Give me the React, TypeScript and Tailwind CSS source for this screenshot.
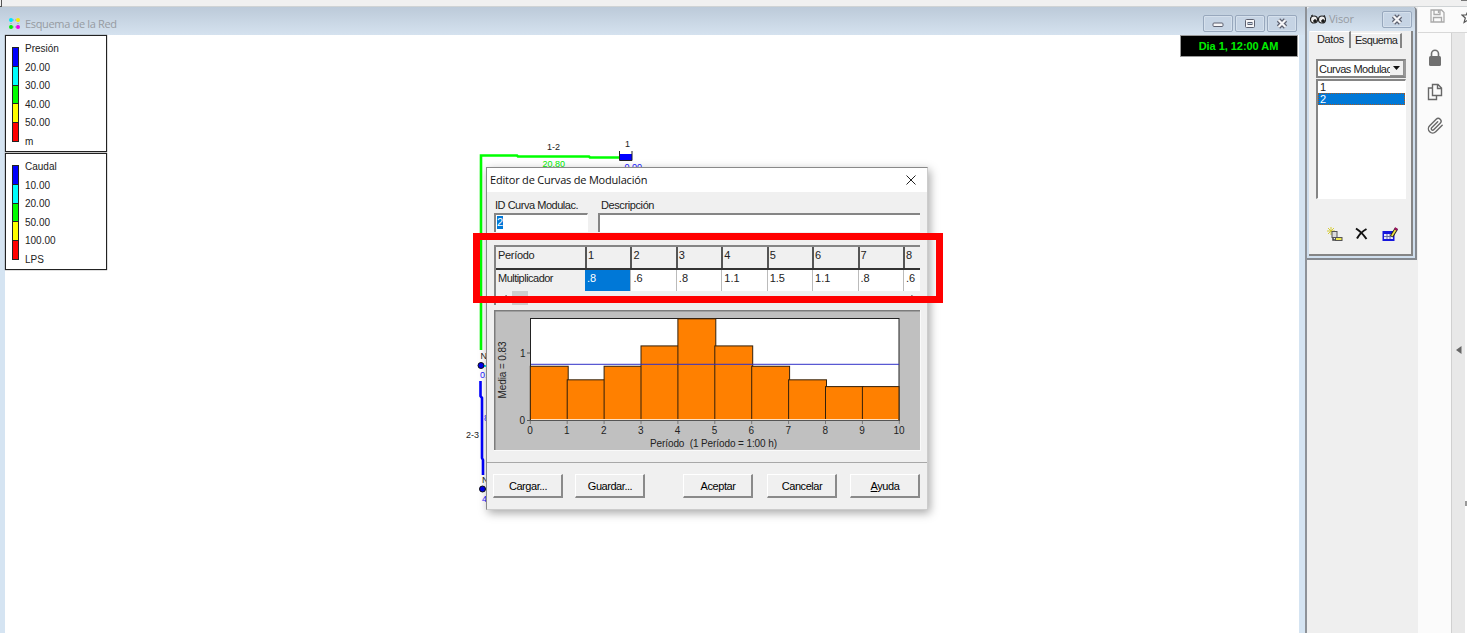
import React from "react";

const COLORS = ["bg-[#0000ff]", "bg-[#00ffff]", "bg-[#00ff00]", "bg-[#ffff00]", "bg-[#ff0000]"];

function Legend({ labels }: { labels: string[] }) {
  return (
    <div className="flex h-[117px] w-[102px] gap-[6px] border border-[#222] bg-white pl-[6px] shadow-[0_0_1px_#444]">
      <div className="mt-[11px] flex h-[95px] w-[7px] flex-col border border-[#222]">
        {COLORS.map((c, i) => (
          <div key={c} className={`flex-1 ${c} ${i ? "border-t border-[#222]" : ""}`} />
        ))}
      </div>
      <div className="mt-[4px] flex flex-col font-['Liberation_Sans',sans-serif] text-[10px] leading-[18.6px] text-[#222]">
        {labels.map((l) => (
          <span key={l}>{l}</span>
        ))}
      </div>
    </div>
  );
}

function WinButton({ kind }: { kind: "min" | "max" | "close" }) {
  return (
    <div className="flex h-[17px] w-[30px] items-center justify-center rounded-[2px] border border-[#98a8bd] bg-[#c6d4e4] shadow-[inset_0_0_0_1px_#d5e0ec]">
      <svg width="12" height="11" viewBox="0 0 12 11">
        {kind === "min" && <rect x="1" y="5" width="10" height="3.5" rx="1" fill="#f6f6f8" stroke="#5d6170" />}
        {kind === "max" && (
          <>
            <rect x="1.500" y="1.500" width="9" height="8" rx="1" fill="#f6f6f8" stroke="#5d6170" />
            <rect x="4" y="4.500" width="4" height="2" fill="#c6d4e4" stroke="#5d6170" />
          </>
        )}
        {kind === "close" && (
          <>
            <path d="M2.500 2l7 7M9.500 2l-7 7" stroke="#5d6170" strokeWidth="4.600" />
            <path d="M2.500 2l7 7M9.500 2l-7 7" stroke="#f6f6f8" strokeWidth="2.200" />
          </>
        )}
      </svg>
    </div>
  );
}

function Network() {
  return (
    <svg className="absolute top-[95px] left-[450px]" width="210" height="380" viewBox="455 130 210 380" fontFamily="Liberation Sans" fontSize="9">
      <path d="M481 350V155.500H517L518 156.500H589L590 157.500H620" fill="none" stroke="#00ff00" strokeWidth="2.600" />
      <path d="M480.500 381V396L482 398V458L483 460V475" fill="none" stroke="#0000ff" strokeWidth="2.600" />
      <rect x="620" y="154" width="12" height="6.500" fill="#0000ff" />
      <path d="M619.500 151v9.500h12.500v-9.500" fill="none" stroke="#222" />
      <path d="M481 366h7M483 489h6" stroke="#00e5ff" strokeWidth="2" />
      <circle cx="481" cy="365.500" r="3" fill="#0000ee" stroke="#111" />
      <circle cx="482.500" cy="489" r="3" fill="#0000ee" stroke="#111" />
      <g fill="#222">
        <text x="547" y="150">1-2</text>
        <text x="625" y="147">1</text>
        <text x="480.500" y="359">N1</text>
        <text x="482" y="483">N2</text>
        <text x="466" y="438">2-3</text>
      </g>
      <text x="542.500" y="167" fill="#00f000" fontSize="9">20.80</text>
      <g fill="#2020ff">
        <text x="624.500" y="169.500" fontSize="9">0.00</text>
        <text x="480" y="378">0.5</text>
        <text x="484" y="421">8</text>
        <text x="482" y="502">4.0</text>
      </g>
    </svg>
  );
}

const MULT = [".8", ".6", ".8", "1.1", "1.5", "1.1", ".8", ".6"];
const DATA = [0.8, 0.6, 0.8, 1.1, 1.5, 1.1, 0.8, 0.6, 0.5, 0.5];

function Chart() {
  const step = 36.9;
  return (
    <svg className="mt-[5px] ml-[7px] block shrink-0" width="427" height="141" viewBox="494 310 427 141" fontFamily="Liberation Sans" fontSize="10" fill="#222">
      <rect x="494" y="310" width="427" height="141" fill="#fafafa" />
      <rect x="494" y="310" width="426" height="140" fill="#7c7c7c" />
      <rect x="495.500" y="311.500" width="424.500" height="138.500" fill="#c0c0c0" />
      <rect x="530.500" y="318.500" width="368.500" height="102" fill="#fff" stroke="#222" />
      {DATA.map((v, i) => (
        <rect
          key={i}
          x={530.3 + i * step}
          y={420.5 - v * 67.8}
          width={i < 9 ? step + 1 : step - 0.3}
          height={v * 67.8}
          fill="#ff8000"
          stroke="#33200a"
        />
      ))}
      <path d="M531 364.300H899" stroke="#3030c8" />
      <path d="M531 419.500H898" stroke="#ffe0c0" />
      <path d="M527 420.500H899M527 353H530" stroke="#555" />
      {DATA.concat(0).map((_, i) => (
        <g key={i}>
          <path d={`M${530.3 + i * step} 421v3`} stroke="#777" />
          <text x={530 + i * step} y="434" textAnchor="middle">{i}</text>
        </g>
      ))}
      <text x="520" y="356.500">1</text>
      <text x="519.500" y="424">0</text>
      <text x="650" y="447" textLength="127" xmlSpace="preserve">{"Período  (1 Período = 1:00 h)"}</text>
      <text transform="translate(506 398.500) rotate(-90)" textLength="57">Media = 0.83</text>
    </svg>
  );
}

function Button({ children }: { children: React.ReactNode }) {
  return (
    <div className="flex h-[24px] w-[70px] items-center justify-center border-t border-r-2 border-b-2 border-l border-t-white border-r-[#8a8a8a] border-b-[#8a8a8a] border-l-white bg-[#f0f0f0] pt-[2px] pl-px text-[11px] tracking-[-0.45px] text-black">
      <span>{children}</span>
    </div>
  );
}

function Dialog() {
  return (
    <div className="absolute top-[132px] left-[481px] flex h-[343px] w-[442px] flex-col border border-[#8a8a8a] border-r-[#ccc] border-b-[#ccc] bg-[#f0f0f0] font-['Liberation_Sans',sans-serif] text-[#222] shadow-[2px_3px_9px_rgba(0,0,0,0.35)]">
      <div className="flex h-[24px] shrink-0 items-center justify-between bg-white pr-[11px] pl-[3px]">
        <span className="font-['Open_Sans',sans-serif] text-[11px] tracking-[-0.2px] whitespace-nowrap text-[#111]">Editor de Curvas de Modulación</span>
        <svg width="10" height="10" viewBox="0 0 10 10">
          <path d="M.5 .5l9 9M9.500 .5l-9 9" stroke="#222" />
        </svg>
      </div>
      <div className="flex h-[21px] shrink-0 items-end text-[11px] leading-[16px] tracking-[-0.47px] whitespace-nowrap">
        <span className="ml-[8px] w-[106px]">ID Curva Modulac.</span>
        <span className="tracking-[-0.4px]">Descripción</span>
      </div>
      <div className="ml-[7px] flex h-[19px] shrink-0 gap-[10px]">
        <div className="flex w-[94px] border-t-2 border-r border-l-2 border-[#858585] border-r-white bg-white pt-[1px] pl-px">
          <span className="h-[13px] bg-[#0078d7] text-[11px] leading-[13px] text-white">2</span>
        </div>
        <div className="w-[322px] border-t-2 border-l-2 border-[#858585] bg-white" />
      </div>
      <div className="mt-[13px] ml-[7px] flex h-[60px] w-[426px] shrink-0 flex-col overflow-hidden border-t-2 border-l-2 border-[#858585] text-[11px]">
        <div className="flex h-[23px] shrink-0 border-b-2 border-[#333]">
          <span className="w-[89px] shrink-0 pl-[2px] leading-[16px] tracking-[-0.3px]">Período</span>
          {MULT.map((_, i) => (
            <span key={i} className="w-[45.430px] shrink-0 border-l-2 border-[#555] pl-[1px] leading-[16px]">{i + 1}</span>
          ))}
        </div>
        <div className="flex h-[21px] shrink-0 bg-white leading-[17px]">
          <span className="w-[89px] shrink-0 bg-[#f0f0f0] pl-[2px] tracking-[-0.52px]">Multiplicador</span>
          {MULT.map((m, i) => (
            <span key={i} className={i === 0 ? "w-[45.430px] shrink-0 bg-[#0078d7] pl-[2px] text-white" : "w-[45.430px] shrink-0 border-l border-[#bbb] pl-[2px]"}>{m}</span>
          ))}
        </div>
        <div className="flex h-[14px] items-center justify-between bg-[#f0f0f0] pr-[5px] pl-[7px]">
          <div className="flex items-center gap-[5px]">
            <svg width="4" height="8" viewBox="0 0 4 8"><path d="M3.500 1L1 4l2.500 3" fill="none" stroke="#444" /></svg>
            <div className="h-[14px] w-[16px] bg-[#cdcdcd]" />
          </div>
          <svg width="4" height="8" viewBox="0 0 4 8"><path d="M.5 1L3 4 .5 7" fill="none" stroke="#444" /></svg>
        </div>
      </div>
      <Chart />
      <div className="mt-[11px] h-px shrink-0 bg-[#a8a8a8]" />
      <div className="mt-[11px] ml-[6px] flex">
        <Button>Cargar...</Button>
        <div className="w-[12px]" />
        <Button>Guardar...</Button>
        <div className="w-[38px]" />
        <Button>Aceptar</Button>
        <div className="w-[14px]" />
        <Button>Cancelar</Button>
        <div className="w-[13px]" />
        <Button><u>A</u>yuda</Button>
      </div>
    </div>
  );
}

function MapWindow() {
  return (
    <section className="flex w-[1305px] shrink-0 flex-col bg-[#d5e4f2]">
      <header className="flex h-[28px] shrink-0 items-center bg-gradient-to-b from-[#bccad9] to-[#d5e2ef] pt-[4px] pr-[8px] pl-[9px]">
        <svg width="11" height="11" viewBox="0 0 11 11">
          <path d="M2 2h7v7H2z" fill="none" stroke="#8c9fae" strokeDasharray="1 1" />
          <circle cx="2" cy="2" r="2" fill="#00e5ff" />
          <circle cx="9" cy="2" r="2" fill="#f6ee00" />
          <circle cx="2" cy="9" r="2" fill="#00ee00" />
          <circle cx="9" cy="9" r="2" fill="#ee00ee" />
        </svg>
        <span className="ml-[5px] flex-1 pt-[2px] font-['Open_Sans',sans-serif] text-[11px] tracking-[-0.33px] text-[#969ba2]">Esquema de la Red</span>
        <div className="flex gap-[2px]">
          <WinButton kind="min" />
          <WinButton kind="max" />
          <WinButton kind="close" />
        </div>
      </header>
      <div className="relative mr-[6px] ml-[5px] flex flex-1 items-start justify-between bg-white">
        <div className="flex flex-col gap-px">
          <Legend labels={["Presión", "20.00", "30.00", "40.00", "50.00", "m"]} />
          <Legend labels={["Caudal", "10.00", "20.00", "50.00", "100.00", "LPS"]} />
        </div>
        <div className="mr-[1px] flex h-[22px] w-[118px] items-center justify-center border border-[#999] bg-black pr-px pt-px font-['Liberation_Sans',sans-serif] text-[11px] font-bold tracking-[-0.05px] whitespace-nowrap text-[#00f000]">Dia 1, 12:00 AM</div>
        <Network />
        <Dialog />
        <div className="absolute top-[198px] left-[468px] h-[70px] w-[470px] border-7 border-[#ff0000]" />
      </div>
    </section>
  );
}

function Visor() {
  return (
    <section className="flex w-[113px] shrink-0 flex-col border-l-2 border-[#8e9298] bg-[#efefef] font-['Liberation_Sans',sans-serif] text-[11px] text-[#222]">
      <div className="flex h-[253px] w-[110px] flex-col rounded-t-[4px] border-r-2 border-b-2 border-[#85898f] bg-[#d0dfee] px-[2px] pb-[2px]">
        <div className="-mx-[2px] flex h-[24px] shrink-0 items-center rounded-t-[4px] bg-gradient-to-b from-[#bccad9] to-[#d5e2ef] pr-[3px] pl-[3px]">
          <svg width="16" height="11" viewBox="0 0 16 11" stroke="#222" fill="#eee">
            <circle cx="4" cy="5.500" r="3.500" strokeWidth="1.200" />
            <circle cx="12" cy="5.500" r="3.500" strokeWidth="1.200" />
            <path d="M1 2l2-1M14 1l1 2" />
            <circle cx="5" cy="7" r="1.300" fill="#111" />
            <circle cx="13" cy="7" r="1.300" fill="#111" />
          </svg>
          <span className="ml-[3px] flex-1 pt-px font-['Open_Sans',sans-serif] tracking-[-0.2px] text-[#969ba2]">Visor</span>
          <WinButton kind="close" />
        </div>
        <div className="flex flex-1 flex-col border-r-2 border-b-2 border-[#858585] bg-[#f0f0f0] pl-px">
          <div className="flex h-[18px] items-start">
            <div className="h-[17px] w-[41px] border-t border-r-2 border-t-white border-r-[#858585] pl-[7px] leading-[14px] tracking-[-0.4px]">Datos</div>
            <div className="mt-[2px] h-[15px] w-[51px] border-t border-r-2 border-t-white border-r-[#858585] pl-[4px] leading-[13px] tracking-[-0.6px]">Esquema</div>
          </div>
          <div className="mt-[10px] ml-[6px] flex h-[19px] w-[90px] shrink-0 border-2 border-[#858585] border-r-[#999] bg-white">
            <span className="w-[72px] pl-px leading-[16px] tracking-[-0.5px] whitespace-nowrap">Curvas Modulac</span>
            <div className="flex flex-1 items-center justify-center border-r border-b border-[#909090] bg-[#f0f0f0]">
              <svg width="7" height="4" viewBox="0 0 7 4"><path d="M0 0h7L3.500 4z" fill="#111" /></svg>
            </div>
          </div>
          <div className="mt-px ml-[6px] flex h-[120px] w-[90px] shrink-0 flex-col border-t-2 border-r border-b border-l-2 border-t-[#858585] border-r-white border-b-white border-l-[#858585] bg-white">
            <span className="h-[12px] pl-[2px] leading-[12px]">1</span>
            <span className="h-[12px] border border-dotted border-[#a65a20] bg-[#0078d7] pl-[1px] leading-[11px] text-white">2</span>
          </div>
          <div className="mt-[28px] ml-[17px] flex gap-[12px]">
            <svg width="16" height="16" viewBox="0 0 16 16">
              <path d="M4 0v8M0 4h8M1 1l6 6M7 1L1 7" stroke="#d5cc35" />
              <rect x="5" y="4.500" width="5" height="6" fill="#ddd" stroke="#555" />
              <path d="M6 11v2h3" fill="none" stroke="#444" strokeWidth="1.500" />
              <rect x="8.500" y="10.500" width="6.500" height="3" fill="#eee850" stroke="#555" />
            </svg>
            <svg className="mr-[2px]" width="13" height="14" viewBox="0 0 13 14">
              <path d="M1 1.500c4 2.500 7 5.500 10.500 10.500M11.500 2C8 4 4.500 7 2 11.500" fill="none" stroke="#111" strokeWidth="2" />
            </svg>
            <svg width="16" height="16" viewBox="0 0 16 16">
              <rect x=".5" y="4" width="12" height="10" fill="#1515dd" />
              <path d="M2 7h9v5H2z" fill="#e8e8ff" />
              <path d="M5 7v5M8 7v5M2 9.500h9" stroke="#666ba5" />
              <path d="M14.500 1.500L9.500 9.500" stroke="#222" strokeWidth="3.500" />
              <path d="M13.500 3L9.800 9" stroke="#eee040" strokeWidth="1.700" />
              <path d="M14.500 1l-1 2" stroke="#a01060" strokeWidth="3" />
            </svg>
          </div>
        </div>
      </div>
    </section>
  );
}

function SideTools() {
  return (
    <aside className="flex flex-1 flex-col overflow-hidden bg-[#fbfbfb]">
      <div className="flex h-[26px] shrink-0 items-start gap-[16px] overflow-hidden border-b border-[#d8d8d8] pt-[2px] pl-[12px]">
        <svg className="shrink-0" width="15" height="14" viewBox="0 0 15 14" fill="none" stroke="#aaa" strokeWidth="1.300">
          <path d="M1 1h10.500L14 3.500V13H1zM4 1v4.500h6V1M3.500 13V8.500h8V13M8.500 1v3" />
        </svg>
        <svg className="mt-[1px] shrink-0" width="14" height="14" viewBox="0 0 14 14" fill="none" stroke="#555" strokeWidth="1.200">
          <path d="M7 1l1.800 4H13L9.700 8l1.200 4.500L7 10l-3.900 2.500L4.300 8 1 5h4.200z" />
        </svg>
      </div>
      <div className="flex flex-1">
        <div className="flex w-[34px] shrink-0 flex-col items-center border-r border-[#d0d0d0] pt-[16px] pl-px">
          <svg width="14" height="18" viewBox="0 0 14 18">
            <path d="M3.500 8V4.800a3.500 3.500 0 0 1 7 0V8" fill="none" stroke="#707070" strokeWidth="1.600" />
            <rect x="1" y="7" width="12" height="10" rx="1.500" fill="#707070" />
          </svg>
          <svg className="mt-[16px]" width="16" height="18" viewBox="0 0 16 18" fill="none" stroke="#686868" strokeWidth="1.400">
            <path d="M5.500 1.500h5.500l3.500 3.500v7.500h-9zM10.500 1.500V5.500h4M5.500 5H1.500v11.500h8v-4" />
          </svg>
          <svg className="mt-[16px]" width="17" height="18" viewBox="0 0 24 24" fill="none" stroke="#686868" strokeWidth="2" strokeLinecap="round">
            <path d="M21.440 11.050l-9.190 9.190a6 6 0 0 1-8.490-8.490l9.190-9.190a4 4 0 0 1 5.660 5.660l-9.200 9.190a2 2 0 0 1-2.830-2.830l8.490-8.480" />
          </svg>
        </div>
        <div className="flex w-[13px] shrink-0 items-start bg-[#e8e8e8] pt-[313px] pl-[4px]">
          <svg width="6" height="8" viewBox="0 0 6 8"><path d="M5.500 0v8L0 4z" fill="#666" /></svg>
        </div>
        <div className="flex-1 bg-white pt-[468px]">
          <div className="h-[5px] bg-[#999]" />
        </div>
      </div>
    </aside>
  );
}

export default function App() {
  return (
    <main className="flex h-[633px] w-[1467px] flex-col overflow-hidden bg-[#efefef]">
      <div className="flex h-[7px] shrink-0 justify-between border-b border-[#cfd3d5] bg-[#f0f0f0]">
        <div className="h-[7px] w-[2px] border-r border-b border-[#555]" />
        <div className="h-px w-[6px] bg-[#777]" />
      </div>
      <div className="flex min-h-0 flex-1">
        <MapWindow />
        <Visor />
        <SideTools />
      </div>
    </main>
  );
}
